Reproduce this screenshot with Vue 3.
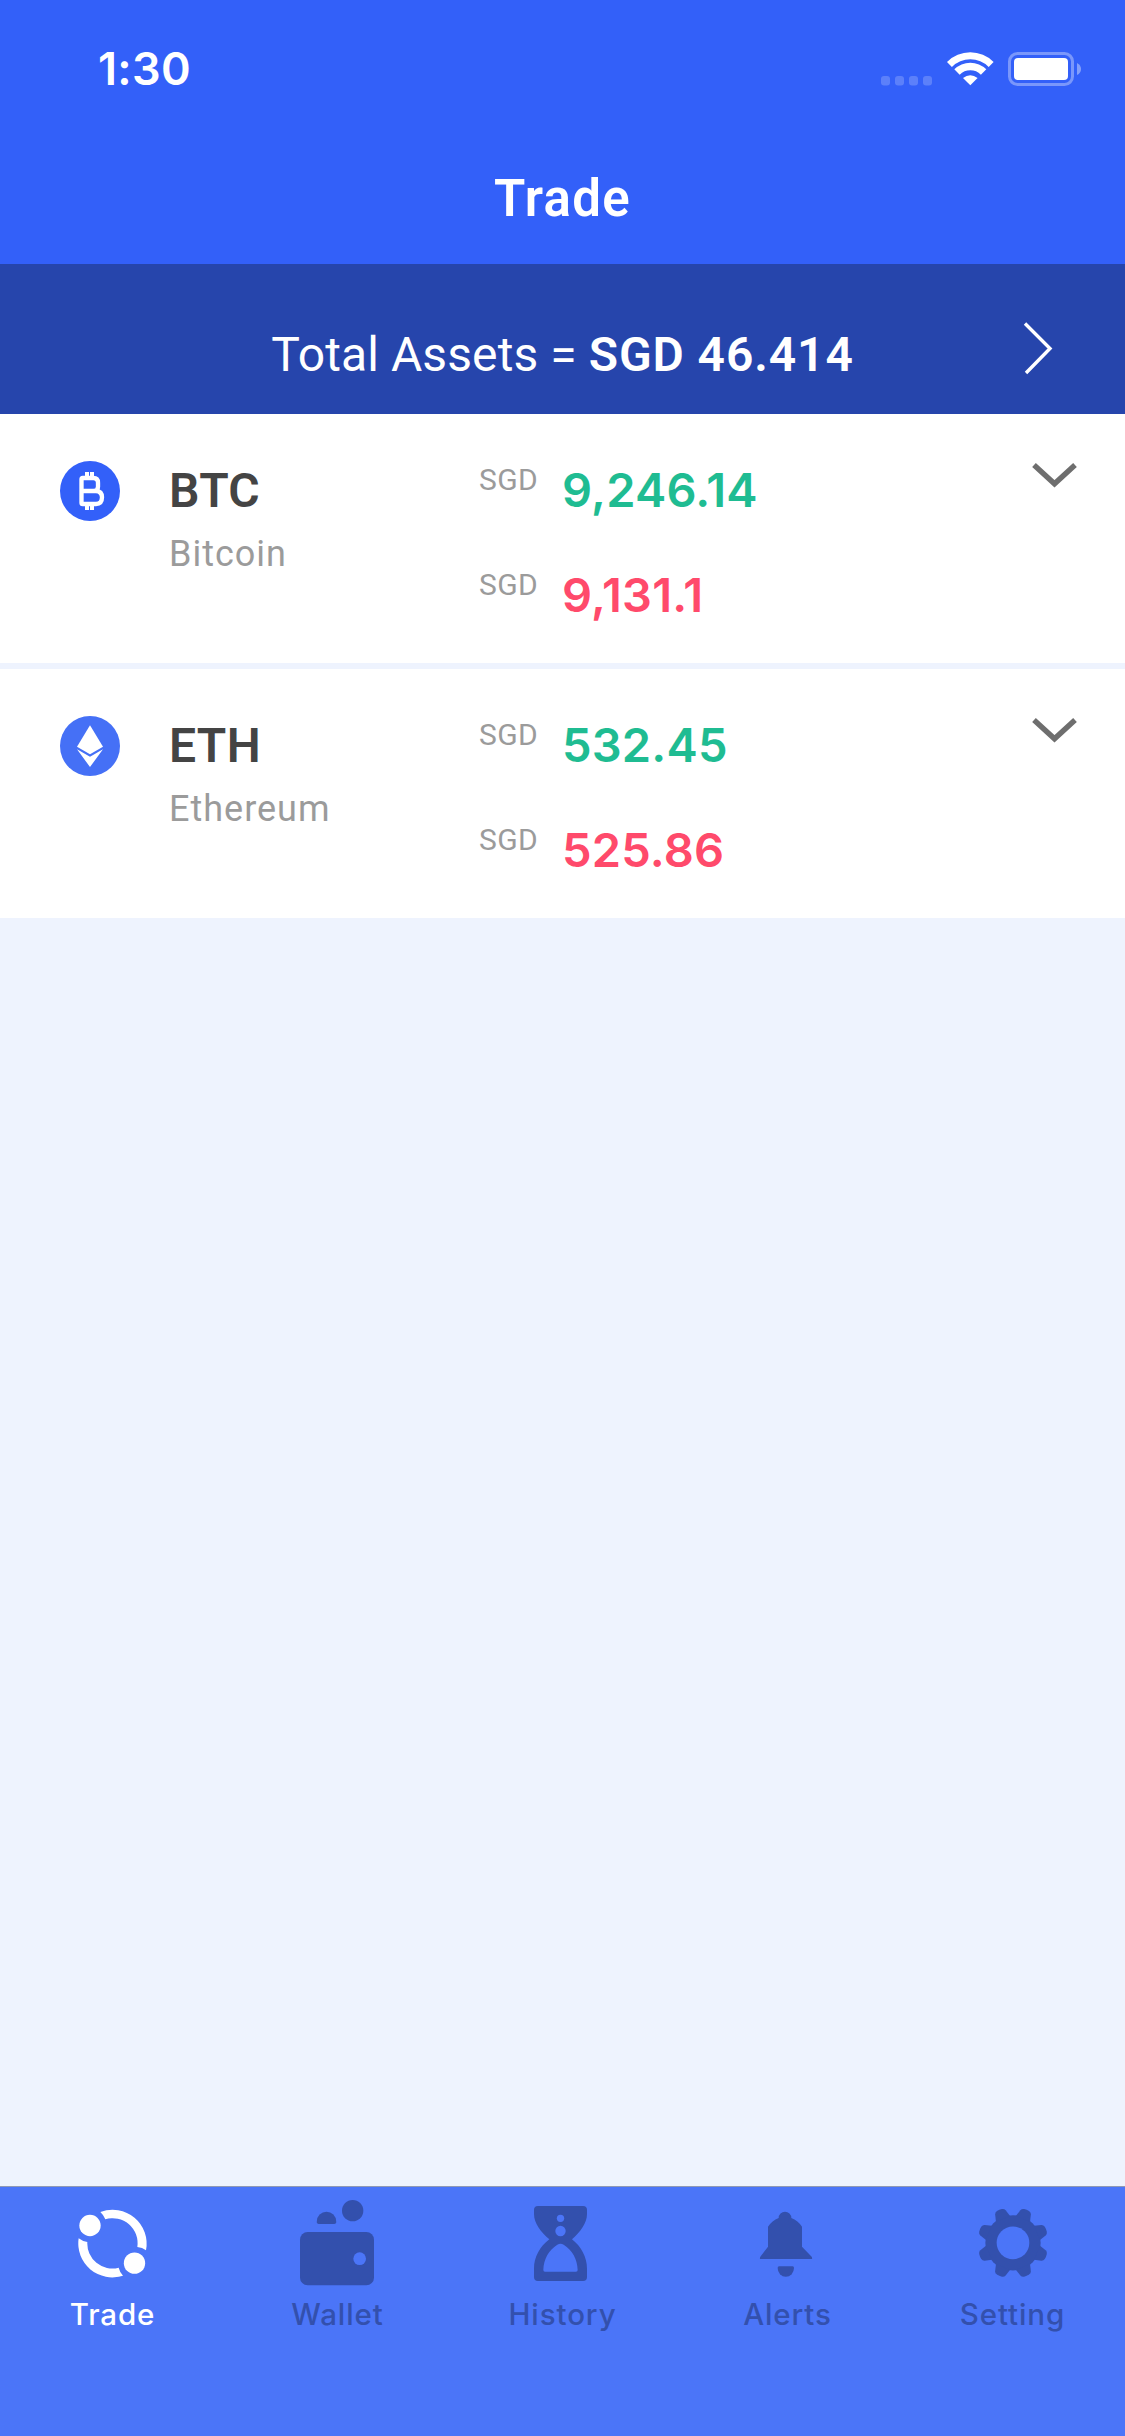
<script setup>
import { ref } from 'vue'

const activeTab = ref('trade')

const coins = [
  { symbol: 'BTC', name: 'Bitcoin', currency: 'SGD', buy: '9,246.14', sell: '9,131.1' },
  { symbol: 'ETH', name: 'Ethereum', currency: 'SGD', buy: '532.45', sell: '525.86' }
]

const tabs = [
  { id: 'trade', label: 'Trade' },
  { id: 'wallet', label: 'Wallet' },
  { id: 'history', label: 'History' },
  { id: 'alerts', label: 'Alerts' },
  { id: 'setting', label: 'Setting' }
]
</script>

<template>
  <div class="screen">
    <header class="header">
      <div class="status-bar">
        <span class="status-bar__time">1:30</span>
        <svg class="status-bar__icons" viewBox="0 0 200 34" fill="#fff">
          <g opacity="0.2">
            <rect v-for="n in 4" :key="n" :x="(n - 1) * 14" y="24" width="9" height="9.5" rx="3" />
          </g>
          <path d="M89.3 33.3L82 26Q89.3 20.5 96.6 26Z" />
          <path d="M73.3 17.3A22.6 22.6 0 0 1 105.3 17.3L99.9 22.7A15 15 0 0 0 78.7 22.7Z" />
          <path d="M66 10A33 33 0 0 1 112.6 10L107.7 14.9A26 26 0 0 0 70.9 14.9Z" />
          <rect x="128.5" y="1.5" width="63" height="31" rx="8" fill="none" stroke="#fff" stroke-width="3" opacity="0.35" />
          <rect x="133" y="6" width="54" height="22" rx="4" />
          <path d="M196 11Q200 13 200 17T196 23Z" opacity="0.4" />
        </svg>
      </div>
      <h1 class="header__title">Trade</h1>
    </header>

    <section class="assets">
      <p class="assets__text">Total Assets = <strong>SGD 46.414</strong></p>
      <svg class="assets__arrow" viewBox="0 0 30 54" fill="none" stroke="#fff" stroke-width="3.4">
        <path d="M2 2.500L27 27.500L3 52" />
      </svg>
    </section>

    <main class="coins">
      <article v-for="coin in coins" :key="coin.symbol" class="coin">
        <svg v-if="coin.symbol === 'BTC'" class="coin__icon" viewBox="180 153 180 180">
          <circle cx="270" cy="243" r="90" fill="#3360f9" />
          <g fill="none" stroke="#fff" stroke-width="13">
            <path d="M248 204H280Q294 204 294 218V230Q294 243 280 243H248M280 243H288Q306 244 306 262Q306 282 288 282H248Q244.500 282 244.500 278V208Q244.500 204 248 204" />
            <path stroke-width="12" d="M261 186V200M276 186V200M261 286V300M276 286V300" />
          </g>
        </svg>
        <svg v-else class="coin__icon" viewBox="180 918 180 180">
          <circle cx="270" cy="1008" r="90" fill="#4570f6" />
          <path d="M270 946L309 1010L270 1033L231 1010Z" fill="#fff" />
          <path d="M231 1018L270 1040L309 1018L270 1071Z" fill="#fff" />
        </svg>

        <div class="coin__names">
          <strong>{{ coin.symbol }}</strong>
          <span>{{ coin.name }}</span>
        </div>

        <div class="coin__prices">
          <div class="coin__price coin__price--buy">
            <span>{{ coin.currency }}</span>
            <strong>{{ coin.buy }}</strong>
          </div>
          <div class="coin__price coin__price--sell">
            <span>{{ coin.currency }}</span>
            <strong>{{ coin.sell }}</strong>
          </div>
        </div>

        <svg class="coin__chevron" viewBox="0 0 45 25" fill="none" stroke="#6e6e6e" stroke-width="5.4">
          <path d="M2 2L22.500 20.800L43 2" />
        </svg>
      </article>
    </main>

    <nav class="tabs">
      <button
        v-for="tab in tabs"
        :key="tab.id"
        class="tab"
        :class="{ 'tab--active': tab.id === activeTab }"
        type="button"
        @click="activeTab = tab.id"
      >
        <svg class="tab__icon" viewBox="0 51 675 309" fill="currentColor">
          <g v-if="tab.id === 'trade'">
            <circle cx="270" cy="166.500" r="32" />
            <circle cx="403.500" cy="279.500" r="32" />
            <path d="M301 126A102 102 0 0 1 438 241Q427 232 412 231A75 75 0 0 0 316 148Q311 135 301 126Z" />
            <path d="M236 205A102 102 0 0 0 369 317Q359 306 356 293A75 75 0 0 1 262 216Q247 214 236 205Z" />
          </g>
          <g v-else-if="tab.id === 'wallet'">
            <circle cx="383" cy="122" r="32" />
            <path d="M275.500 154A29 29 0 0 1 333.500 154V157Q333.500 162 328 162H281Q275.500 162 275.500 157Z" />
            <rect x="225" y="186" width="222" height="160" rx="23" />
            <circle class="tab__hole" cx="404" cy="266" r="19" />
          </g>
          <g v-else-if="tab.id === 'history'">
            <path d="M264 108H399Q411 108 411 120V132C411 160 391 185 366 208C394 230 411 262 411 296V321Q411 333 399 333H264Q252 333 252 321V296C252 262 269 230 298 208C272 185 252 160 252 132V120Q252 108 264 108Z" />
            <circle class="tab__hole" cx="331.500" cy="145" r="11" />
            <circle class="tab__hole" cx="331.500" cy="183" r="15.500" />
            <path class="tab__hole" d="M322 224Q331.500 218 341 224C367 240 382 267 383 300Q383 305 378 305H285Q280 305 280 300C281 267 296 240 322 224Z" />
          </g>
          <g v-else-if="tab.id === 'alerts'">
            <path d="M311 144A19 19 0 0 1 349 144Q369 152 381 170V230L410 260Q412 264 411 267H255Q254 263 257 259L279 230V170Q291 152 311 144Z" />
            <path d="M312 289H353Q357 289 357 294A24.500 26 0 0 1 308 294Q308 289 312 289Z" />
          </g>
          <g v-else transform="translate(339 218.500)">
            <circle r="83" />
            <path
              v-for="n in 8"
              :key="n"
              :transform="`rotate(${n * 45 - 22.5})`"
              d="M-23 -78L-17 -99Q-15 -105 -8 -106.500Q0 -108 8 -106.500Q15 -105 17 -99L23 -78Z"
            />
            <circle class="tab__hole" r="49" />
          </g>
        </svg>
        <span class="tab__label">{{ tab.label }}</span>
      </button>
    </nav>
  </div>
</template>

<style>
body {
  margin: 0;
}
</style>

<style scoped>
.screen {
  display: flex;
  flex-direction: column;
  width: 1125px;
  height: 2436px;
  background: #eef3fe;
  font-family: Roboto, "Liberation Sans", sans-serif;
}

.header {
  height: 264px;
  background: #3360f9;
  color: #fff;
}

.status-bar {
  display: flex;
  align-items: center;
  justify-content: space-between;
  box-sizing: border-box;
  height: 134px;
  padding: 4px 44px 0 98px;
}

.status-bar__time {
  font-family: Inter, sans-serif;
  font-size: 45px;
  font-weight: 600;
  line-height: 54px;
  letter-spacing: 0.3px;
}

.status-bar__icons {
  width: 200px;
  height: 34px;
}

.header__title {
  margin: 0;
  font-size: 51px;
  font-weight: 600;
  line-height: 130px;
  letter-spacing: 1.3px;
  text-align: center;
}

.assets {
  display: grid;
  grid-template-columns: 102px 1fr 102px;
  align-items: center;
  box-sizing: border-box;
  height: 150px;
  padding-top: 31px;
  background: #2645ac;
  color: #fff;
}

.assets__text {
  grid-column: 2;
  margin: 0;
  font-size: 48px;
  line-height: 60px;
  letter-spacing: 0.1px;
  text-align: center;
  white-space: nowrap;
}

.assets__text strong {
  font-weight: 600;
  letter-spacing: 0.9px;
}

.assets__arrow {
  width: 30px;
  height: 54px;
  margin-top: -14px;
}

.coins {
  display: flex;
  flex: 1;
  flex-direction: column;
  gap: 6px;
}

.coin {
  display: grid;
  grid-template-columns: 109px 310px 1fr 45px;
  align-items: start;
  box-sizing: border-box;
  height: 249px;
  padding: 47px 48px 0 60px;
  background: #fff;
}

.coin__icon {
  width: 60px;
  height: 60px;
}

.coin__names {
  display: flex;
  flex-direction: column;
  gap: 11px;
}

.coin__names strong {
  color: #444;
  font-size: 48px;
  font-weight: 600;
  line-height: 60px;
  letter-spacing: 0.3px;
}

.coin__names span {
  color: #9b9b9b;
  font-size: 36px;
  line-height: 44px;
  letter-spacing: 1px;
}

.coin__price {
  display: grid;
  grid-template-columns: 83px 1fr;
  align-items: start;
  height: 105px;
}

.coin__price span {
  color: #9b9b9b;
  font-size: 30px;
  line-height: 38px;
  letter-spacing: 0.4px;
}

.coin__price strong {
  font-family: Inter, sans-serif;
  font-size: 47px;
  font-weight: 600;
  line-height: 58px;
  letter-spacing: 0.2px;
}

.coin__price--buy strong {
  color: #1fbc92;
}

.coin__price--sell strong {
  color: #ff4a6b;
}

.coin__chevron {
  width: 45px;
  height: 25px;
  margin-top: 2px;
}

.tabs {
  display: grid;
  grid-template-columns: repeat(5, 1fr);
  box-sizing: border-box;
  height: 250px;
  border-top: 1px solid #8f99b5;
  background: #4b75f8;
}

.tab {
  display: flex;
  flex-direction: column;
  align-items: center;
  padding: 0;
  border: 0;
  background: none;
  color: #3350ad;
}

.tab--active {
  color: #fff;
}

.tab__icon {
  width: 225px;
  height: 103px;
}

.tab__hole {
  fill: #4b75f8;
}

.tab__label {
  margin-top: 6px;
  font-family: Inter, sans-serif;
  font-size: 29.5px;
  font-weight: 450;
  line-height: 36px;
  letter-spacing: 0.9px;
}
</style>
